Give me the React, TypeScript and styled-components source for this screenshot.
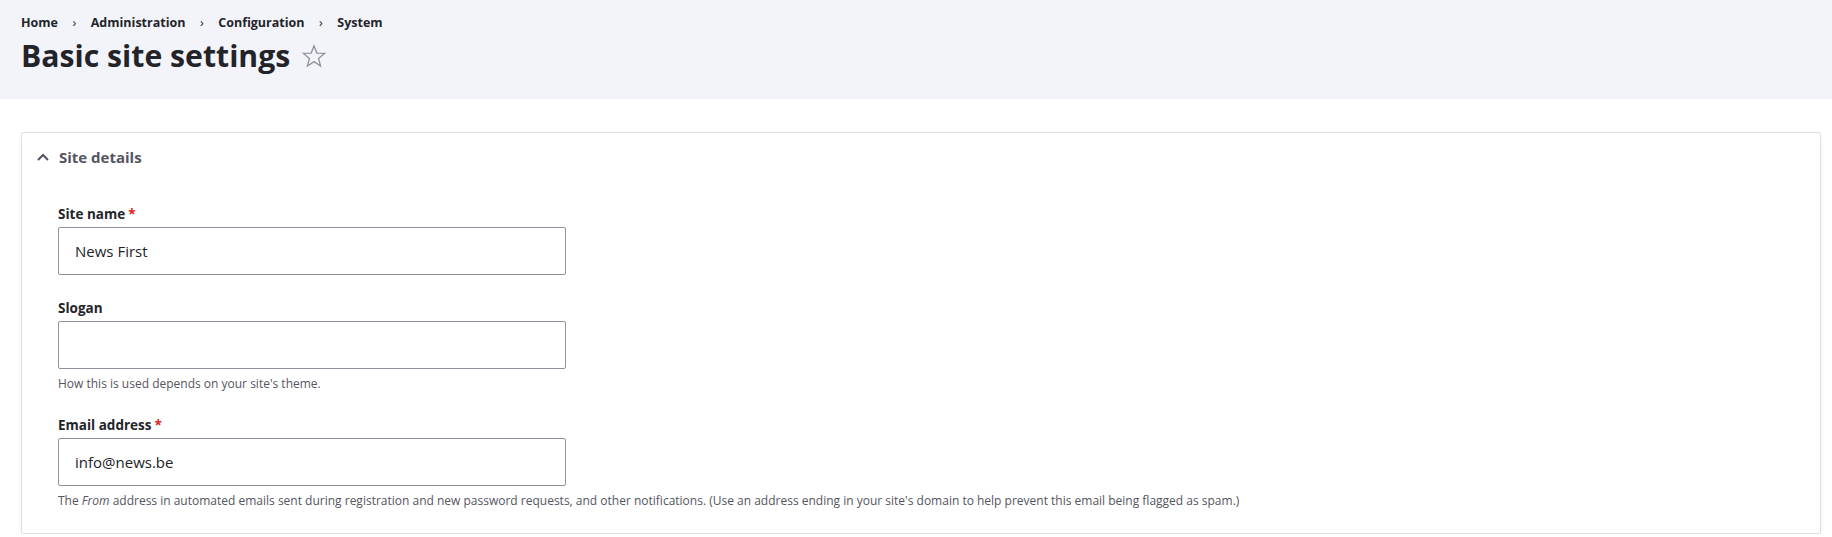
import React from "react";
import styled, { createGlobalStyle } from "styled-components";

const GlobalStyle = createGlobalStyle`
  html, body { margin: 0; padding: 0; background: #ffffff; }
  body {
    font-family: "Open Sans", "Noto Sans", sans-serif;
    color: #232429;
    -webkit-font-smoothing: antialiased;
  }
  * { box-sizing: border-box; }
`;

const Header = styled.header`
  background: #f3f4f9;
  padding: 13px 21px 23px;
  height: 99px;
`;

const Breadcrumb = styled.nav`
  display: flex;
  align-items: center;
  font-size: 12.5px;
  font-weight: 700;
  line-height: 20px;
  color: #232429;
`;

const Crumb = styled.span``;

const Sep = styled.span`
  font-weight: 400;
  color: #232429;
  padding: 0 14.5px;
`;

const TitleRow = styled.div`
  display: flex;
  align-items: center;
  gap: 11px;
  margin-top: 2px;
`;

const Title = styled.h1`
  margin: 0;
  font-size: 30.2px;
  font-weight: 700;
  line-height: 42px;
  color: #232429;
`;

const Main = styled.main`
  padding: 33px 11px 0 21px;
`;

const Card = styled.section`
  border: 1px solid #dedfe4;
  border-radius: 2px;
  background: #fff;
  box-shadow: 0 3px 6px -2px rgba(0, 0, 0, 0.12);
  padding-bottom: 24px;
`;

const Summary = styled.div`
  display: flex;
  align-items: center;
  gap: 9px;
  padding: 14px 14px 16px 14px;
  font-size: 15px;
  font-weight: 700;
  line-height: 20px;
  color: #545560;
`;

const Body = styled.div`
  padding: 22px 36px 0;
  display: flex;
  flex-direction: column;
  gap: 24px;
`;

const Field = styled.div`
  display: flex;
  flex-direction: column;
`;

const Label = styled.label`
  font-size: 13.5px;
  font-weight: 700;
  line-height: 18px;
  margin-bottom: 4px;
  color: #232429;
`;

const Req = styled.span`
  color: #dc2323;
  margin-left: 3px;
`;

const Input = styled.input`
  width: 508px;
  height: 48px;
  border: 1px solid #8e929c;
  border-radius: 2px;
  padding: 0 16px;
  font-family: inherit;
  font-size: 15px;
  color: #232429;
  background: #fff;
  outline: none;
`;

const Desc = styled.div`
  margin-top: 6px;
  font-size: 12px;
  line-height: 17px;
  color: #545560;
`;

const Star = () => (
  <svg width="26" height="26" viewBox="0 0 24 24" fill="none" stroke="#8e929c" strokeWidth="1.2" strokeLinejoin="miter">
    <path d="M12 2.5l2.6 6.8 7.2.3-5.6 4.6 1.9 7-6.1-4-6.1 4 1.9-7-5.6-4.6 7.2-.3z" />
  </svg>
);

const Chevron = () => (
  <svg width="14" height="14" viewBox="0 0 14 14" fill="none" stroke="#545560" strokeWidth="2">
    <path d="M2 10l5-5 5 5" />
  </svg>
);

export default function App() {
  return (
    <>
      <GlobalStyle />
      <Header>
        <Breadcrumb>
          <Crumb>Home</Crumb>
          <Sep>›</Sep>
          <Crumb>Administration</Crumb>
          <Sep>›</Sep>
          <Crumb>Configuration</Crumb>
          <Sep>›</Sep>
          <Crumb>System</Crumb>
        </Breadcrumb>
        <TitleRow>
          <Title>Basic site settings</Title>
          <Star />
        </TitleRow>
      </Header>
      <Main>
        <Card>
          <Summary>
            <Chevron />
            Site details
          </Summary>
          <Body>
            <Field>
              <Label>
                Site name<Req>*</Req>
              </Label>
              <Input defaultValue="News First" />
            </Field>
            <Field>
              <Label>Slogan</Label>
              <Input defaultValue="" />
              <Desc>How this is used depends on your site's theme.</Desc>
            </Field>
            <Field>
              <Label>
                Email address<Req>*</Req>
              </Label>
              <Input defaultValue="info@news.be" />
              <Desc>
                The <em>From</em> address in automated emails sent during registration and new password requests, and other
                notifications. (Use an address ending in your site's domain to help prevent this email being flagged as spam.)
              </Desc>
            </Field>
          </Body>
        </Card>
      </Main>
    </>
  );
}
